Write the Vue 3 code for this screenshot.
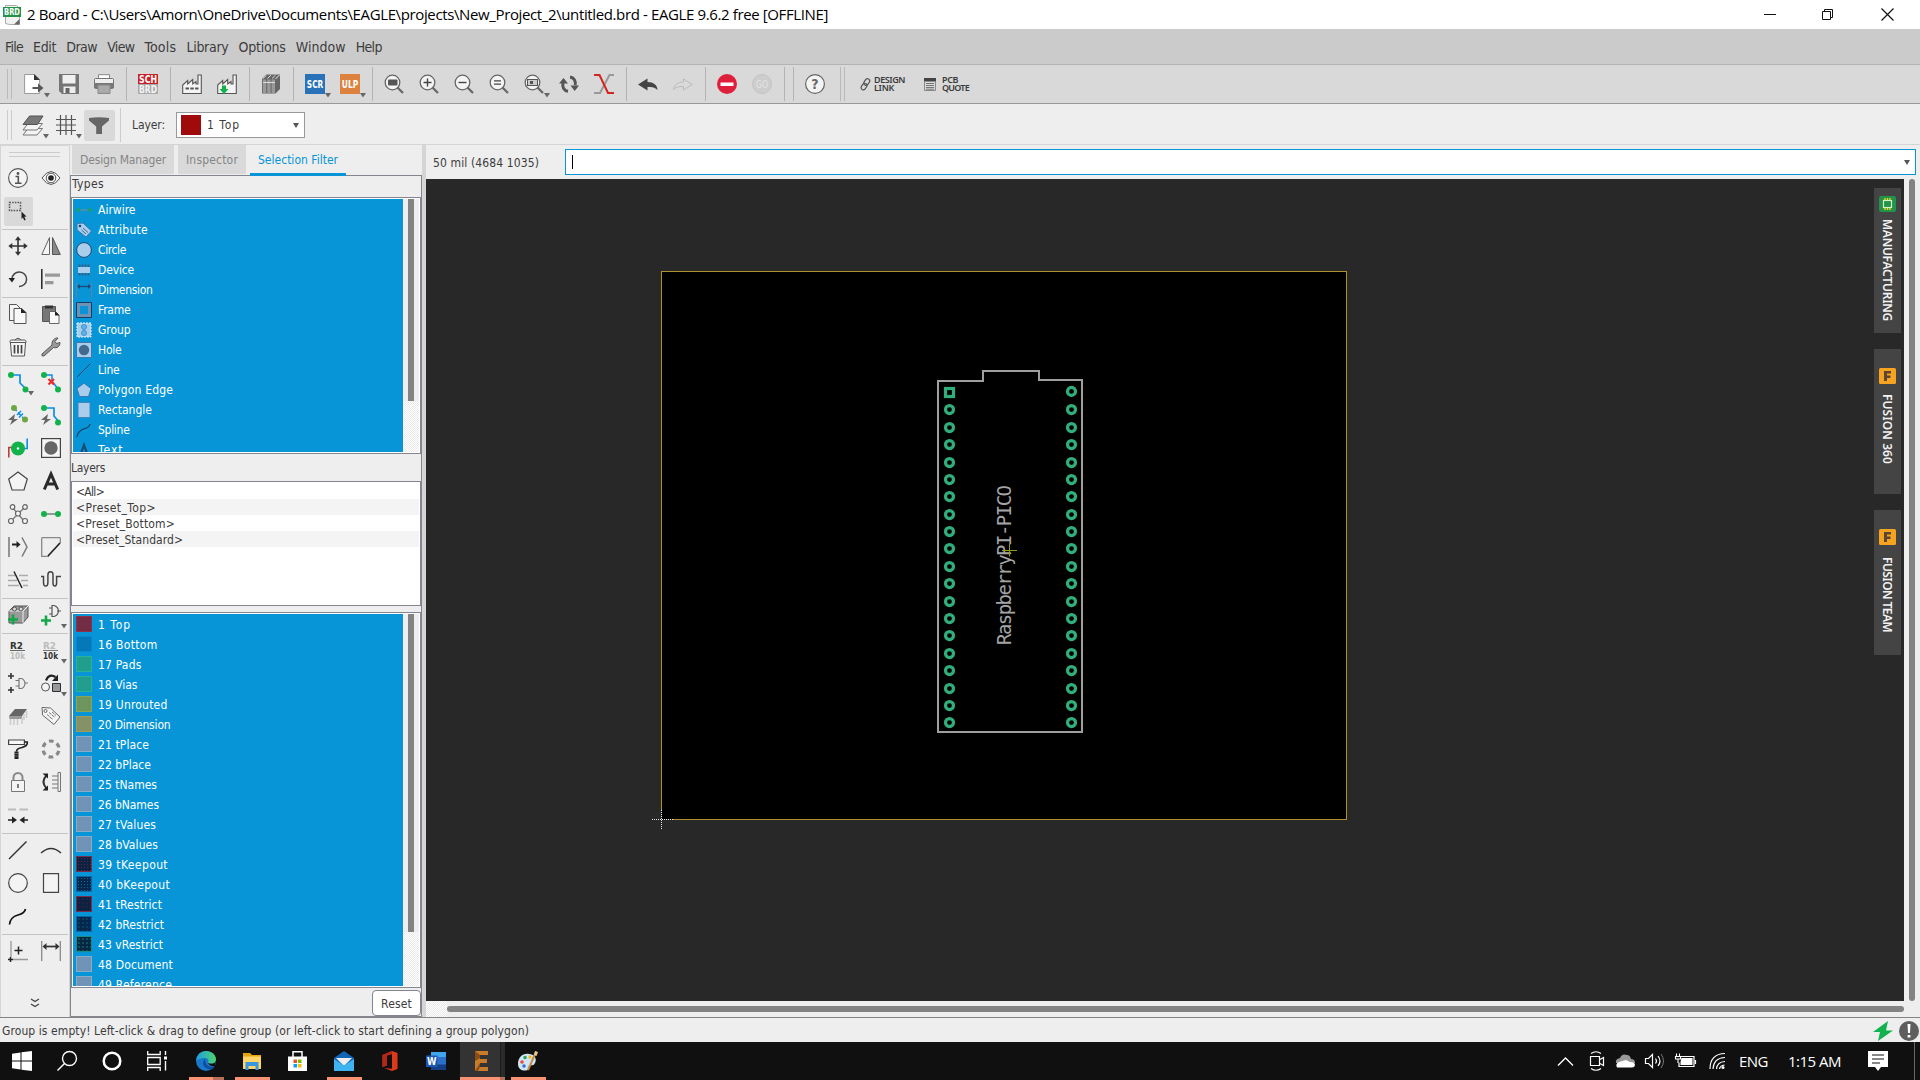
<script setup>
// Stretches or tightens a label's tracking so it takes the given length in px
const vFit = {
  mounted(el, { value, arg }) {
    if (!value) return
    const box = el.getBoundingClientRect()
    const size = arg === 'y' ? box.height : box.width
    const n = el.textContent.trim().length
    el.style.letterSpacing = ((value - size) / n).toFixed(3) + 'px'
  },
}

const menus = [['File', 18], ['Edit', 23], ['Draw', 31], ['View', 27], ['Tools', 32], ['Library', 42], ['Options', 47], ['Window', 50], ['Help', 26]]

const arrow = '<path d="M20 19h6l-3 4.500z" fill="#666"/>'
const lens = '<circle cx="8.500" cy="8.500" r="7.300" fill="#f4f4f4" stroke="#666" stroke-width="1.300"/><path d="M13.500 13.500l5.500 5.500" stroke="#666" stroke-width="2.200"/>'
const g = '#12b24a'
const b = '#0d8ee9'
const dot = (x, y, c = g) => `<circle cx="${x}" cy="${y}" r="3" fill="${c}"/>`
const factory = '<path d="M.700 19.500V11l5-4.500V10l5-4.500V10l3.300-2.500V10h2V1h3.300v18.500z" fill="#f4f4f4" stroke="#555" stroke-width="1.100"/>'

const icons = {
  file: `<path d="M.600.500h10l5 5v14h-15z" fill="#fff" stroke="#999"/><path d="M10 0l6 6h-6z" fill="#333"/><path d="M8.500 14h8" stroke="#555" stroke-width="2"/><path d="M14 9.500l5.500 4.500-5.500 4.500z" fill="#555"/>${arrow}`,
  save: '<path d="M0 0h20v20H3l-3-3z" fill="#757575"/><path d="M3.500 1h13v8.500h-13z" fill="#f0f0f0"/><path d="M4.500 12.500h12V19h-12z" fill="#eee"/><path d="M6.500 14h4v5h-4z" fill="#666"/>',
  print: '<path d="M4.500 5V.700h11V5" fill="#fff" stroke="#888"/><rect x=".500" y="4.500" width="19" height="10" rx="1" fill="#eee" stroke="#777"/><path d="M0 9h20v5H0z" fill="#777"/><path d="M4 11h12v8.500H4z" fill="#aaa" stroke="#888"/>',
  sch: '<path d="M0 0h20v10H0z" fill="#ca2027"/><path d="M0 10h20v10H0z" fill="#aaa"/><text x="1" y="8.800" font-size="10" textLength="18" lengthAdjust="spacingAndGlyphs" font-weight="bold" fill="#fff">SCH</text><text x="1" y="18.800" font-size="10" textLength="18" lengthAdjust="spacingAndGlyphs" font-weight="bold" fill="#f4f4f4">BRD</text>',
  cam: factory + '<path d="M3.500 14.500h13" stroke="#555" stroke-width="2" stroke-dasharray="3.500 1.300"/>',
  camdown: factory + `<path d="M5 11.500h4V15h2.500L7 20 2.500 15H5z" fill="${g}"/>`,
  lib: '<path d="M1 5l4-4.500h14V15l-4.500 4.500H1z" fill="#666"/><path d="M1.800 5.500h3.400v13.500H1.800zM6.200 5.500h3.400v13.500H6.200zM10.600 5.500h3.400v13.500h-3.400z" fill="#999"/><path d="M2 4.500l3.500-3.300M6.500 4.500L10 1.200M11 4.500l3.500-3.300M2 8.500h12" stroke="#ddd"/><path d="M14.500 5l4-4" stroke="#eee"/>',
  scr: `<path d="M0 0h20v20H0z" fill="#2a72b8"/><text x="1.800" y="13.800" font-size="10" font-weight="bold" fill="#fff" textLength="16.500" lengthAdjust="spacingAndGlyphs">SCR</text>${arrow}`,
  ulp: `<path d="M0 0h20v20H0z" fill="#dc823e"/><text x="1.800" y="13.800" font-size="10" font-weight="bold" fill="#fff" textLength="16.500" lengthAdjust="spacingAndGlyphs">ULP</text>${arrow}`,
  zfit: lens + '<rect x="4" y="5.500" width="9.500" height="6" rx="1" fill="#555"/>',
  zin: lens + '<path d="M4.500 8.500h8M8.500 4.500v8" stroke="#444" stroke-width="1.400"/>',
  zout: lens + '<path d="M4.500 8.500h8" stroke="#444" stroke-width="1.400"/>',
  zredraw: lens + '<path d="M5 6.800h7M5 10.200h7" stroke="#444" stroke-width="1.300"/>',
  zsel: lens + `<rect x="3.500" y="5.500" width="10" height="6" fill="#ccc" stroke="#555"/><path d="M6 7h3v3H6z" fill="#555"/>${arrow}`,
  sync: '<path d="M9 17.300c-4-.600-6-4-5-8.500M11 3c4 .500 6 4 5.200 8.300" fill="none" stroke="#555" stroke-width="3"/><path d="M0 9.500L4.500 4 9 9.500zM11.500 11.500h8.500L15.700 17z" fill="#555"/>',
  rats: '<path d="M20 1h-4.500L6 19H0" fill="none" stroke="#999" stroke-width="2"/><path d="M0 1h5.500L14 19h6" fill="none" stroke="#d2251f" stroke-width="2"/>',
  undo: '<path d="M0 10.500L9.500 4.500v3.500c6 0 10 3 10 8-2.500-2.500-5-3-10-3v3.500z" fill="#444"/>',
  redo: '<path d="M19.300 10.500L10.500 5v3C5 8 .800 11 .700 15.500 3 13 5.500 12.500 10.500 12.500V16z" fill="none" stroke="#bbb"/>',
  stop: '<circle cx="10" cy="10" r="10" fill="#df203c"/><path d="M3.500 8.500h13v3.500h-13z" fill="#fff"/>',
  go: '<circle cx="10" cy="10" r="9.500" fill="#cdcdcd" stroke="#c4c4c4"/><text x="4" y="14" font-size="11" fill="#e3e3e3" textLength="12" lengthAdjust="spacingAndGlyphs">GO</text>',
  help: '<circle cx="10" cy="10" r="9.400" fill="#f4f4f4" stroke="#666" stroke-width="1.200"/><text x="10" y="15" text-anchor="middle" font-size="14" font-weight="bold" fill="#666">?</text>',
  layers: `<path d="M5 13h14.500l-5.500 6.500H0z" fill="#f4f4f4" stroke="#777" transform="translate(0 .500)"/><path d="M5 8.500h14.500L14 15H0z" fill="#f4f4f4" stroke="#777" /><path d="M6.500 1H20l-5.500 8.500H0z" fill="#777" stroke="#555"/>${arrow}`,
  grid: `<path d="M4.500 0v20M10 0v20M15.500 0v20M0 4.500h20M0 10h20M0 15.500h20" stroke="#555" stroke-width="1.200"/>${arrow}`,
  filter: '<path d="M0 2q10-1.500 20 0v2.500l-7 6v7.500H7.200v-7.500L0 4.500z" fill="#666"/>',
  info: '<circle cx="10" cy="10" r="9.400" fill="#f4f4f4" stroke="#555" stroke-width="1.100"/><circle cx="10" cy="5.500" r="1.400" fill="#555"/><path d="M7.500 8.500h2.800V15M7 15.300h6.500" fill="none" stroke="#555" stroke-width="1.600"/>',
  eye: '<path d="M1 10q9-13 18 0-9 13-18 0z" fill="#f8f8f8" stroke="#555"/><circle cx="10" cy="10" r="4.800" fill="none" stroke="#555"/><circle cx="10" cy="10" r="2.800" fill="#222"/>',
  select: '<path d="M1.500 1.500h11v8h-11z" fill="none" stroke="#555" stroke-width="1.500" stroke-dasharray="1.500 1.200"/><path d="M13.500 10.500l5 5-2.200.300 1.400 2.900-1.400.700-1.400-3-1.400 1.500z" fill="#222"/>',
  move: '<path d="M10 3v14M3 10h14" stroke="#333" stroke-width="1.600"/><path d="M10 .300l3 4H7zM10 19.700l3-4H7zM.300 10l4-3v6zM19.700 10l-4-3v6z" fill="#333"/>',
  mirror: '<path d="M8.500 1.500v17H.800z" fill="#f4f4f4" stroke="#666"/><path d="M11.500 1.500v17h7.800z" fill="#888" stroke="#555"/>',
  rotate: '<path d="M4 10a7.300 7.300 0 1 1 7 7.500" fill="none" stroke="#444" stroke-width="1.500"/><path d="M.500 9h6.500l-3 4.500z" fill="#222"/>',
  align: '<path d="M.800 0v20" stroke="#222" stroke-width="1.500"/><path d="M4 4.500h15v3.300H4zM4 12h8.500v3.300H4z" fill="#999"/>',
  copy: '<path d="M1.500.500h7l4 4v12h-11z" fill="#f4f4f4" stroke="#555"/><path d="M6 4.500h7.500l4.500 4v11H6z" fill="#f8f8f8" stroke="#555"/><path d="M13 4l5.500 5H13z" fill="#222"/>',
  paste: '<path d="M1.500 2.500h13v15h-13z" fill="#777" stroke="#555"/><path d="M4 1.500h8v3H4z" fill="#333"/><path d="M8.500 7.500h6l3.500 3.500v8.500H8.500z" fill="#f8f8f8" stroke="#666"/><path d="M14 7l4.500 4.500H14z" fill="#222"/>',
  trash: '<path d="M2.500 5.500h15v.500l-1 13h-13l-1-13z" fill="#f4f4f4" stroke="#555"/><path d="M2 4.500q0-1.500 1.500-1.500h13q1.500 0 1.500 1.500v1H2zM7 3q3-3.500 6 0" fill="#f4f4f4" stroke="#555"/><path d="M6.500 8v8.500M10 8v8.500M13.500 8v8.500" stroke="#444" stroke-width="1.700"/>',
  wrench: '<path d="M1 17l10-9c-.500-4 2.500-7.500 6-7l-3 3.500 1.500 2 3.500-1c0 4-3 6-6.500 5L3 19q-3 .500-2-2z" fill="#999" stroke="#555"/>',
  route: `<path d="M4 3h8v8l6 6" fill="none" stroke="${b}" stroke-width="1.700"/>${dot(3, 3)}${dot(17.5, 17.5)}${arrow}`,
  ripup: `<path d="M4 3h7v6l6 8" fill="none" stroke="${b}" stroke-width="1.500"/><path d="M7.500 7l5.500 5.500M13 7l-5.500 5.500" stroke="#f02b2b" stroke-width="2.200"/>${dot(3, 3)}${dot(17, 17.500)}`,
  fanout: `<path d="M6 3l11 12" stroke="${b}" stroke-width="1.500" stroke-dasharray="4 2"/><path d="M9 10l4-4M11 12.500l4-4" stroke="${b}" stroke-width="1.500"/>${dot(6, 3, '#6ba642')}${dot(17, 14.500, '#6ba642')}<path d="M7 9l-7 6h4l-2 5 8-6H6z" fill="#666"/>`,
  autoroute: `<path d="M4 3h9v8l5 6" fill="none" stroke="${b}" stroke-width="1.700"/>${dot(3, 3)}${dot(17, 17.500)}<path d="M7 9l-7 6h4l-2 5 8-6H6z" fill="#666"/>`,
  via: `<path d="M.800 19.500V9.500H6" fill="none" stroke="#c43a3a" stroke-width="1.600"/><path d="M19.200.500v10H14" fill="none" stroke="${b}" stroke-width="1.600"/><circle cx="10" cy="10.500" r="7" fill="${g}"/><circle cx="10" cy="10.500" r="1.200" fill="#fff"/>`,
  hole: '<rect x=".600" y=".600" width="18.800" height="18.800" fill="#f6f6f6" stroke="#444" stroke-width="1.200"/><circle cx="10" cy="10" r="6.700" fill="#666"/>',
  poly: '<path d="M10 1l9.300 7L16 19H4L.700 8z" fill="#f4f4f4" stroke="#444" stroke-width="1.200"/>',
  text: '<path d="M3.300 18.500L10 3l6.700 15.500M6 13h8" fill="none" stroke="#2a2a2a" stroke-width="3"/>',
  net: '<path d="M4 3l12 14M17 3L3 17" stroke="#777" stroke-width="1.300"/><g fill="#f4f4f4" stroke="#666" stroke-width="1.200"><circle cx="4.500" cy="3" r="2.300"/><circle cx="17" cy="3" r="2.300"/><circle cx="10" cy="9.500" r="2.500"/><circle cx="3" cy="17" r="2.500"/><circle cx="17" cy="17" r="2.500"/></g>',
  airwire: `<path d="M3 10h14" stroke="#888" stroke-width="1.700"/>${dot(3, 10)}${dot(17, 10)}`,
  opti: '<path d="M1 0v20M14 .500l5 9.500-5 9.500" fill="none" stroke="#777" stroke-width="1.500"/><path d="M4 7.500h6" stroke="#222" stroke-width="2"/><path d="M8.500 4l4 3.500-4 3.500z" fill="#222"/>',
  miter: '<path d="M.700.700h18.600M.700.700v18.600H8M19.300.700V6" fill="none" stroke="#888" stroke-width="1.300"/><path d="M7 19L19 6" stroke="#222" stroke-width="1.700"/>',
  split: '<path d="M0 5.500h7M11 5.500h9M0 10.500h9M13 10.500h7M0 15.500h11M15 15.500h5" stroke="#aaa" stroke-width="1.600"/><path d="M6 1.500l8 16.500" stroke="#222" stroke-width="1.500"/>',
  meander: '<path d="M0 6.500h2.500v6q0 3.500 2.200 3.500t2.200-3.500V5q0-3.300 2.600-3.300T12 5v8q0 3 1.800 3t1.800-3V6.500H20" fill="none" stroke="#444" stroke-width="1.500"/>',
  part: `<path d="M1 6l5-5h14v11l-5 6H1z" fill="#999" stroke="#555"/><path d="M1 6h14v12M15 6l5-5" fill="none" stroke="#eee"/><circle cx="6.500" cy="4" r="2" fill="#ddd" stroke="#555"/><circle cx="13" cy="4" r="2" fill="#ddd" stroke="#555"/><path d="M0 14.500h10M5 9.500v10" stroke="#12a847" stroke-width="2.600"/>`,
  gate: `<path d="M8 3h3M8 9h3M16 6h4M11 .500h2q4 1 4.500 5.500-.500 4.500-4.500 5.500h-2z" fill="none" stroke="#555" stroke-width="1.200"/><path d="M0 15.500h10M5 10.500v10" stroke="#12a847" stroke-width="2.600"/>${arrow}`,
  name: '<text x="2" y="8.700" font-size="9.500" font-weight="bold" fill="#333" textLength="13" lengthAdjust="spacingAndGlyphs">R2</text><path d="M2 10.500h15" stroke="#666"/><text x="2" y="19" font-size="9.500" font-weight="bold" fill="#bbb" textLength="15" lengthAdjust="spacingAndGlyphs">10k</text>',
  value: `<text x="2" y="8.700" font-size="9.500" font-weight="bold" fill="#bbb" textLength="13" lengthAdjust="spacingAndGlyphs">R2</text><path d="M2 10.500h15" stroke="#777"/><text x="2" y="19" font-size="9.500" font-weight="bold" fill="#333" textLength="15" lengthAdjust="spacingAndGlyphs">10k</text>${arrow}`,
  smash: '<path d="M0 3h6M3 0v6M0 17h6M3 14v6" stroke="#333" stroke-width="1.600"/><path d="M7.500 7.500h4M7.500 13h4M17 10h3M11 5.500h2.500q3 1 3.500 5-.500 4-3.500 5H11z" fill="none" stroke="#777" stroke-width="1.200"/>',
  replace: `<path d="M5 7.500Q8 0 14.500 4" fill="none" stroke="#222" stroke-width="2.200"/><path d="M17 1.500v6.500h-6z" fill="#222"/><circle cx="4.500" cy="14" r="4" fill="#f4f4f4" stroke="#555"/><path d="M11.500 10.500h8v8h-8z" fill="#999" stroke="#2a2f3a"/>${arrow}`,
  lock1: '<path d="M7 3h12l-5 7H1z" fill="#666"/><path d="M1 10h13l.500 3H1.500z" fill="#999"/><path d="M2.500 13v6M6 13v6M9.500 13v6M14 12v6M16 8v6M18.500 5v7" stroke="#ccc" stroke-width="1.500"/>',
  tag: '<path d="M1 1.500l8.500.500L19 11l-6 7.500L1.500 9z" fill="#f4f4f4" stroke="#666"/><circle cx="4.500" cy="5" r="1.500" fill="none" stroke="#666"/><path d="M6 8.500l6 5M8 6.500l6 5M11 6l4 3.500" stroke="#777" stroke-dasharray="3 .600"/>',
  paint: '<path d="M.600 1h15.800v4.500H.600z" fill="#f8f8f8" stroke="#444" stroke-width="1.200"/><path d="M16.500 3h2.800q.500 4-5.300 5.500-5.500 1-5.500 4" fill="none" stroke="#222" stroke-width="1.600"/><path d="M6.500 12.500h4V20h-4z" fill="#222"/><path d="M6.500 14.500h4M6.500 17h4" stroke="#999" stroke-width=".600"/>',
  ring: '<circle cx="10" cy="10" r="8" fill="none" stroke="#888" stroke-width="3.200" stroke-dasharray="4.600 3.777" stroke-dashoffset="-1.900"/>',
  lock: '<path d="M3.500 8.500h13v11h-13z" fill="#f4f4f4" stroke="#777"/><path d="M5.500 8.500V5.500a4.500 4.500 0 0 1 9 0v3" fill="none" stroke="#888" stroke-width="2"/><path d="M10 12v4" stroke="#555" stroke-width="1.500"/>',
  pinswap: '<path d="M5.500 3.500q-6 6 0 13" fill="none" stroke="#333" stroke-width="2"/><path d="M1.500 1.500h5.500v5zM1.500 18.500h5.500v-5z" fill="#222"/><path d="M17 .500h2.500v19H17zM11 4h6M11 8h6M11 12h6M11 16h6" fill="none" stroke="#777"/>',
  pair: '<path d="M0 4.500h8M11.500 4.500h8.500" stroke="#bbb" stroke-width="2"/><path d="M0 15h5M15 15h5" stroke="#222" stroke-width="1.700"/><path d="M4 11.500l5 3.500-5 3.500zM16.500 11.500l-5 3.500 5 3.500z" fill="#222"/>',
  line: '<path d="M1 19L18.500 1.500" stroke="#333" stroke-width="1.400"/>',
  arc: '<path d="M0 13q10-9 20 0" fill="none" stroke="#333" stroke-width="1.400"/>',
  circle: '<circle cx="10" cy="10" r="9.300" fill="#f4f4f4" stroke="#444" stroke-width="1.200"/>',
  rect: '<path d="M2.500.600h15v18.800h-15z" fill="#f4f4f4" stroke="#444" stroke-width="1.200"/>',
  spline: '<path d="M1.500 18.500c.500-6 3.500-8 8.500-9.500 4-1 7-3 7.500-6" fill="none" stroke="#111" stroke-width="1.700"/>',
  mark: '<path d="M3 0v16M5 18.500h15" stroke="#999" stroke-width="1.300"/><path d="M10.500 5.500v8M6.500 9.500h8M2.500 16v5M0 18.500h5" stroke="#222" stroke-width="1.500"/>',
  dim: '<path d="M.700 0v20M19.300 0v20" stroke="#888" stroke-width="1.300"/><path d="M4 5.500h12" stroke="#333" stroke-width="1.700"/><path d="M5.500 2L1.500 5.500l4 3.500zM14.500 2l4 3.500-4 3.500z" fill="#333"/>',
}

const toolbar = [
  ['file', 'save', 'print'], ['sch'], ['cam', 'camdown'], ['lib'], ['scr', 'ulp'],
  ['zfit', 'zin', 'zout', 'zredraw', 'zsel', 'sync', 'rats'], ['undo', 'redo'], ['stop', 'go'],
]

const palette = [
  [['info', 'eye'], ['select']],
  [['move', 'mirror'], ['rotate', 'align']],
  [['copy', 'paste'], ['trash', 'wrench']],
  [['route', 'ripup'], ['fanout', 'autoroute'], ['via', 'hole'], ['poly', 'text'], ['net', 'airwire'], ['opti', 'miter'], ['split', 'meander']],
  [['part', 'gate']],
  [['name', 'value'], ['smash', 'replace'], ['lock1', 'tag'], ['paint', 'ring'], ['lock', 'pinswap'], ['pair']],
  [['line', 'arc'], ['circle', 'rect'], ['spline']],
  [['mark', 'dim']],
]

const lb = '#abcdec'
const dk = '#1d4a73'
const types = [
  ['Airwire', 37.5, '<path d="M4 8h8" stroke="#6a8fb5" stroke-width="1.300"/><circle cx="2.500" cy="8" r="2.200" fill="#13a076"/><circle cx="13.500" cy="8" r="2.200" fill="#13a076"/>'],
  ['Attribute', 50, `<path d="M1 1.500L7 1l8.500 8-5.500 6L1 8z" fill="${lb}" stroke="#3a75aa"/><circle cx="4" cy="4" r="1.300" fill="${dk}"/><path d="M5.500 8l4.500 4M7 6l5 4.500" stroke="#3a6a96"/>`],
  ['Circle', 28, `<circle cx="8" cy="8" r="7.400" fill="${lb}" stroke="${dk}"/>`],
  ['Device', 36, `<path d="M3.500 2.500v11M6.500 2.500v11M9.500 2.500v11M12.500 2.500v11" stroke="#35608a" stroke-width="1.800"/><rect x="2" y="5" width="12" height="6" fill="${lb}"/>`],
  ['Dimension', 54.5, `<path d="M.500 0v16M15.500 0v16" stroke="#4e86b8"/><path d="M2 4.500h12" stroke="${dk}" stroke-width="1.300"/><path d="M4 2L1 4.500 4 7zM12 2l3 2.500L12 7z" fill="${dk}"/>`],
  ['Frame', 32.5, '<path d="M.500.500h15v15H.500z" fill="#6f93b7" stroke="#173f66"/><path d="M4 4h8v8H4z" fill="#0795d8"/>'],
  ['Group', 32.5, `<path d="M1 1h14v14H1z" fill="${lb}" stroke="#e6f2ff" stroke-dasharray="2 1"/><circle cx="8" cy="5" r="2.500" fill="#62b4e8" stroke="#3b93cf"/><circle cx="8" cy="11" r="2.500" fill="#62b4e8" stroke="#3b93cf"/>`],
  ['Hole', 23.5, `<path d="M.500.500h15v15H.500z" fill="${lb}" stroke="#4078ab"/><circle cx="8" cy="8" r="5.200" fill="#44698e"/>`],
  ['Line', 21.5, `<path d="M1 15L14.500 1.500" stroke="#17456f"/>`],
  ['Polygon Edge', 75, `<path d="M8 1.200l7 5.300-2.500 8h-9L1 6.500z" fill="${lb}" stroke="#3d78ae"/>`],
  ['Rectangle', 54, `<path d="M2 .500h12v15H2z" fill="${lb}" stroke="#4584ba"/>`],
  ['Spline', 31.5, '<path d="M1 15c.500-5 3-6.500 6.500-8 4-1 6-2 6.500-5" fill="none" stroke="#0c3558" stroke-width="1.200"/>'],
  ['Text', 25.5, `<path d="M3.500 15.500L8 3l4.500 12.500M5.500 12h5" fill="none" stroke="${dk}" stroke-width="2.200"/>`],
]

const presets = [['<All>', 28], ['<Preset_Top>', 80], ['<Preset_Bottom>', 99], ['<Preset_Standard>', 107]]

const layers = [
  ['1', 'Top', 33, 'top'], ['16', 'Bottom', 59.5, 'bottom'], ['17', 'Pads', 43.5, 'pads'], ['18', 'Vias', 39.5, 'pads'],
  ['19', 'Unrouted', 69.5, 'unrouted'], ['20', 'Dimension', 72.5, 'dimension'], ['21', 'tPlace', 51, 'grey'], ['22', 'bPlace', 53, 'grey'],
  ['25', 'tNames', 59, 'grey'], ['26', 'bNames', 61, 'grey'], ['27', 'tValues', 58, 'grey'], ['28', 'bValues', 60, 'grey'],
  ['39', 'tKeepout', 70, 'keep-t'], ['40', 'bKeepout', 72, 'keep-b'], ['41', 'tRestrict', 64, 'res-t'], ['42', 'bRestrict', 66, 'res-b'],
  ['43', 'vRestrict', 65, 'res-v'], ['48', 'Document', 75, 'grey'], ['49', 'Reference', 74, 'grey'],
]

// Pad rows of the module, in canvas coordinates
const padRows = [178, 232, 283, 337, 388, 439, 493, 544, 595, 649, 700, 754, 805, 856, 910, 961, 1015, 1066, 1117].map((v) => 171.2 + v / 3)
const leftPads = padRows
const rightPads = [212.4, ...padRows]

const rail = [['MANUFACTURING', 102, 'm'], ['FUSION 360', 70, 'f'], ['FUSION TEAM', 75, 't']]

const fIcon = '<rect width="17" height="16" rx="1.500" fill="#f6a41f"/><path d="M5 13V3h7v2.500H8v2h3.500V10H8v3z" fill="#5a4632"/>'
const railIcons = {
  m: '<rect width="17" height="16" rx="2" fill="#219447"/><path d="M6 2v12M8.500 2v12M11 2v12" stroke="#f3d91c" stroke-width="1.300"/><rect x="4.500" y="4.500" width="8" height="7" fill="#219447" stroke="#dcebc8" stroke-width="1.200"/>',
  f: fIcon,
  t: fIcon,
}

const apps = [
  ['start', 12, 20, '<path d="M0 2.800L8.500 1.500v8H0zM9.500 1.300L20 0v9.500H9.500zM0 10.500h8.500v8L0 17.300zM9.500 10.500H20V20L9.500 18.700z" fill="#fff"/>'],
  ['search', 57, 20, '<circle cx="12.500" cy="7.500" r="7" fill="none" stroke="#fff" stroke-width="1.400"/><path d="M7.500 12.500L.500 19.500" stroke="#fff" stroke-width="1.500"/>'],
  ['cortana', 102, 20, '<circle cx="10" cy="10" r="8.300" fill="none" stroke="#fff" stroke-width="2.500"/>'],
  ['tasks', 147, 20, '<path d="M.700 0v3.500h12.500V0M.700 20v-3.500h12.500V20M.700 6.500h12.500v7H.700z" fill="none" stroke="#fff" stroke-width="1.300"/><path d="M18.500 0v4M18.500 10v9.500" stroke="#fff" stroke-width="1.400"/><path d="M17 5.500h3v3h-3z" fill="#fff"/>'],
  ['edge', 196, 20, '<defs><linearGradient id="eg" x1="0" x2="1"><stop offset="0" stop-color="#1c9de8"/><stop offset="1" stop-color="#4fd467"/></linearGradient></defs><circle cx="10" cy="10" r="10" fill="#1a77c9"/><path d="M0 10C.500 3.500 5 0 10 0c6 0 10 4 10 8.500 0 4-4.500 5-8 3.500 1-1.500 1-5-3-5-4 0-9 2-9 3z" fill="url(#eg)"/><path d="M9 8c-4 3-2 10 6 10.500 1.500-.500 3-1.500 3.700-3-5 1.500-9.500-1-9.700-7.500z" fill="#0d4f9e"/><path d="M20 9c-.500 4-5 4.500-8 3 1 2 4 4 7 3z" fill="#101010"/>'],
  ['files', 243, 18, '<path d="M0 2h7l2 2h9v14H0z" fill="#e5a50e"/><path d="M0 5.500h18V18H0z" fill="#fdd568"/><path d="M2.500 11h13v8h-3v-4h-7v4h-3z" fill="#3a97dd"/>'],
  ['store', 288, 19, '<path d="M5 6V.800h9V6" fill="none" stroke="#fff" stroke-width="1.500"/><path d="M0 5.500h19V20H0z" fill="#fff"/><path d="M5.500 8.500h3.500v3.500H5.500z" fill="#e8502b"/><path d="M10 8.500h3.500v3.500H10z" fill="#7fba00"/><path d="M5.500 13h3.500v3.500H5.500z" fill="#00a4ef"/><path d="M10 13h3.500v3.500H10z" fill="#ffb900"/>'],
  ['mail', 334, 20, '<path d="M0 7L10 0l10 7v12H0z" fill="#1266b8"/><path d="M2 7h16l-8 8z" fill="#eee"/><path d="M0 8l10 6.500L20 8v12H0z" fill="#3db3f0"/>'],
  ['office', 382, 16, '<path d="M10 0l5.500 2v16L10 20 2 17l8 .800V3L5 4.500v10L.500 16V4z" fill="#dd3a1a"/><path d="M.500 4L10 0v3L5 4.500v10L.500 16z" fill="#b3261a"/>'],
  ['word', 426, 20, '<path d="M5 1h15v18H5z" fill="#2a6fc9"/><path d="M5 1h15v5H5z" fill="#41a5ee"/><path d="M5 13.500h15V19H5z" fill="#123f85"/><path d="M0 4.500h11.500v11.500H0z" fill="#1a56b8"/><text x="1" y="13.700" font-size="10" font-weight="bold" fill="#fff" textLength="9.500" lengthAdjust="spacingAndGlyphs">W</text>'],
  ['eagle', 475, 14, '<path d="M0 0h13v4H5v4h7v4H5v4h8v4H0z" fill="#c87b2a"/><path d="M0 0l5 4v3L0 10zM5 12l-5 8h3l2-4z" fill="#8a4c14"/>'],
  ['paintapp', 518, 20, '<path d="M0 13C0 6 5 2 11 3c6 .500 8 5 6 9s-5 1-6 3 1 4-3 4.500S0 18 0 13z" fill="#cfe4f4"/><circle cx="4" cy="11" r="1.800" fill="#e64a3b"/><circle cx="7" cy="6.500" r="1.700" fill="#2e9f48"/><circle cx="12" cy="6" r="1.700" fill="#f2bb1d"/><circle cx="6" cy="15" r="1.700" fill="#2b6fd4"/><path d="M18 1l-8 18" stroke="#c98b43" stroke-width="2"/><path d="M16 4l1-4 3 1-1.500 4z" fill="#f0c690"/>'],
]
</script>

<template>
  <div class="app">
    <header class="title">
      <svg class="brd" width="18" height="20" viewBox="0 0 18 20"><path d="M2.500.500h11l3 3v16h-10l-4-1z" fill="#f2f2f2" stroke="#aaa" /><path d="M11 19.500l5.500-5.500v5.500z" fill="#666" /><path d="M0 2h18v10H0z" fill="#219349" /><text x="1" y="10.300" font-size="9" font-weight="bold" fill="#fff" textLength="16" lengthAdjust="spacingAndGlyphs">BRD</text></svg>
      <span v-fit="801" class="caption">2 Board - C:\Users\Amorn\OneDrive\Documents\EAGLE\projects\New_Project_2\untitled.brd - EAGLE 9.6.2 free [OFFLINE]</span>
      <svg class="winbtns" width="130" height="14" viewBox="0 0 130 14"><path d="M0 7.500h12" stroke="#111" /><path d="M58.500 4.500h8v8h-8zM60.500 4.500v-2h8v8h-2" fill="none" stroke="#111" /><path d="M117.500 1.500l12 12M129.500 1.500l-12 12" stroke="#111" stroke-width="1.200" /></svg>
    </header>

    <nav class="menu">
      <span v-for="m in menus" :key="m[0]" v-fit="m[1]">{{ m[0] }}</span>
    </nav>

    <div class="bar main-bar">
      <i class="grip"></i>
      <div v-for="(grp, i) in toolbar" :key="i" class="grp">
        <svg v-for="k in grp" :key="k" class="ic" viewBox="0 0 20 20" v-html="icons[k]"></svg>
      </div>
      <i class="vline"></i>
      <div class="grp"><svg class="ic" viewBox="0 0 20 20" v-html="icons.help"></svg></div>
      <i class="grip second"></i>
      <div class="link design">
        <svg width="11" height="13" viewBox="0 0 11 13"><g fill="none" stroke="#555" stroke-width="1.200"><rect x="4.500" y=".500" width="4.500" height="7" rx="2.200" transform="rotate(35 6.700 4)" /><rect x="1.800" y="5" width="4.500" height="7" rx="2.200" transform="rotate(35 4 8.500)" /></g></svg>
        <span class="two"><b v-fit="31">DESIGN</b><b v-fit="20">LINK</b></span>
      </div>
      <div class="link quote">
        <svg width="12" height="13" viewBox="0 0 12 13"><path d="M0 0h12v3.500H0z" fill="#444" /><path d="M.500 3v9.500h11V3" fill="none" stroke="#888" /><path d="M2 5.500h8M2 7.500h8M2 9.500h8M2 11.200h8" stroke="#777" /></svg>
        <span class="two"><b v-fit="16">PCB</b><b v-fit="27">QUOTE</b></span>
      </div>
    </div>

    <div class="bar layer-bar">
      <i class="grip"></i>
      <svg class="ic first" viewBox="0 0 20 20" v-html="icons.layers"></svg>
      <svg class="ic" viewBox="0 0 20 20" v-html="icons.grid"></svg>
      <div class="pressed"><svg class="ic" viewBox="0 0 20 20" v-html="icons.filter"></svg></div>
      <i class="vline"></i>
      <span v-fit="33" class="lbl">Layer:</span>
      <div class="combo"><i></i><span v-fit="33">1 Top</span><svg width="6" height="5" viewBox="0 0 6 5"><path d="M0 0h6L3 5z" fill="#555" /></svg></div>
    </div>

    <main>
      <aside class="palette">
        <i class="hgrip"></i>
        <template v-for="(sec, i) in palette" :key="i">
          <i v-if="i" class="hline"></i>
          <div v-for="(row, r) in sec" :key="r" class="tools">
            <div v-for="k in row" :key="k" class="tool" :class="{ on: k === 'select' }"><svg class="ic" viewBox="0 0 20 20" v-html="icons[k]"></svg></div>
          </div>
        </template>
        <svg class="more" width="10" height="10" viewBox="0 0 10 10"><path d="M1 1l4 2.500L9 1M1 6l4 2.500L9 6" fill="none" stroke="#444" stroke-width="1.400" /></svg>
      </aside>

      <section class="side">
        <div class="tabs">
          <div class="tab t1"><span v-fit="86">Design Manager</span></div>
          <div class="tab t2"><span v-fit="52">Inspector</span></div>
          <div class="tab t3"><span v-fit="80">Selection Filter</span></div>
        </div>
        <div class="pane">
          <div class="head"><span v-fit="32">Types</span></div>
          <div class="box types">
            <div class="blue">
              <div v-for="t in types" :key="t[0]" class="item"><svg width="16" height="16" viewBox="0 0 16 16" v-html="t[2]"></svg><span v-fit="t[1]">{{ t[0] }}</span></div>
            </div>
            <div class="sb"><i></i></div>
          </div>
          <div class="head second"><span v-fit="34">Layers</span></div>
          <div class="box presets">
            <div v-for="p in presets" :key="p[0]" class="preset"><span v-fit="p[1]">{{ p[0] }}</span></div>
          </div>
          <div class="box layers">
            <div class="blue">
              <div v-for="l in layers" :key="l[0]" class="item"><i class="sw" :class="l[3]"></i><span v-fit="l[2]">{{ l[0] }} {{ l[1] }}</span></div>
            </div>
            <div class="sb"><i></i></div>
          </div>
          <div class="foot"><button><span v-fit="31">Reset</span></button></div>
        </div>
      </section>

      <section class="work">
        <div class="cmd">
          <span v-fit="106" class="pos">50 mil (4684 1035)</span>
          <div class="input"><i></i><svg width="6" height="5" viewBox="0 0 6 5"><path d="M0 0h6L3 5z" fill="#555" /></svg></div>
        </div>
        <div class="view">
          <div class="canvas">
            <svg width="1478" height="822" viewBox="0 0 1478 822">
              <rect x="235.500" y="92.500" width="685" height="548" fill="#000" stroke="#b0912f" />
              <path d="M226 640.500h21M235.500 631v20" stroke="#282828" />
              <path d="M226 640.500h21M235.500 631v20" stroke="#e8e8e8" stroke-dasharray="1 1" />
              <path d="M512 202H557V192H613V201H656V553H512z" fill="none" stroke="#9f9f9f" stroke-width="2" />
              <g fill="none" stroke="#31ae7b" stroke-width="3.200">
                <rect x="519.500" y="209.500" width="8" height="8" />
                <circle v-for="y in leftPads" :key="'l' + y" cx="523.500" :cy="y" r="4" />
                <circle v-for="y in rightPads" :key="'r' + y" cx="645.500" :cy="y" r="4" />
              </g>
              <text class="silk" transform="translate(585 466) rotate(-90)" textLength="160" lengthAdjust="spacing">RaspberryPI-PICO</text>
              <path d="M576 371.500h15M583.500 364.500v13" stroke="#8f9c22" />
            </svg>
            <div class="rail">
              <div v-for="r in rail" :key="r[0]" class="rtab" :class="r[2]"><svg width="17" height="16" viewBox="0 0 17 16" v-html="railIcons[r[2]]"></svg><span v-fit:y="r[1]">{{ r[0] }}</span></div>
            </div>
          </div>
          <div class="vsb"><i></i></div>
        </div>
        <div class="hsb"><b></b><i></i></div>
      </section>
    </main>

    <footer class="status">
      <span v-fit="527">Group is empty! Left-click &amp; drag to define group (or left-click to start defining a group polygon)</span>
      <div class="flags">
        <svg width="20" height="20" viewBox="0 0 20 20"><path d="M15 0L0 11h7L5 20l15-10.500h-7z" fill="#12b24f" /></svg>
        <svg width="20" height="20" viewBox="0 0 20 20"><circle cx="10" cy="10" r="10" fill="#5e5e5e" /><path d="M8.500 3h3l-.500 9H9zM8.600 14h2.800v2.500H8.600z" fill="#fff" /></svg>
      </div>
    </footer>

    <div class="taskbar">
      <div class="apps">
        <i class="active"></i>
        <svg v-for="a in apps" :key="a[0]" class="app-ic" :class="a[0]" :width="a[2]" height="20" :viewBox="`0 0 ${a[2]} 20`" v-html="a[3]"></svg>
        <i class="ul u1"></i><i class="ul u2"></i><i class="ul u3"></i><i class="ul u4"></i><i class="ul u5"></i>
      </div>
      <div class="tray">
        <svg width="141" height="20" viewBox="0 0 141 20" fill="none" stroke="#fff">
          <path d="M1 14.500L8.500 7l7.500 7.500" stroke-width="1.300" />
          <path d="M33.500 5.500h9v9h-9zM43 8.500l3.500-2v8l-3.500-2M34 2.500q5-3.500 10 0M34 17.500q5 3.500 10 0" stroke-width="1.200" />
          <path d="M59 12q-1-4 4-5 2-5 7-3 3 0 4 4 4 0 4 4z" fill="#999" stroke="none" /><path d="M60 16.500q-2-4 2-5.500l7-2 4 2q5 0 5 3-.500 2.500-3 2.500z" fill="#fff" stroke="none" />
          <path d="M88.500 7.500h3l4-4v13l-4-4h-3zM98.500 7.500q2 2.500 0 5M101 5q4 5 0 10" stroke-width="1.200" /><path d="M104 3q5 7 0 14" stroke="#777" />
          <path d="M124 5.500h13v10h-15v-4M138.500 9v4" stroke-width="1.200" /><path d="M124.500 7h11v7h-12v-3z" fill="#fff" stroke="none" /><path d="M119.500 2.500v3M122.500 2.500v3M118.500 5.500h5v2.500h-5zM121 8v4" stroke-width="1.100" />
        </svg>
        <svg class="wifi" width="16" height="18" viewBox="0 0 16 18" fill="none" stroke="#fff" stroke-width="1.200"><path d="M1 17Q1 2 16 1.500M4 17Q4.500 6 16 5.500M7.500 17q.500-7 8.500-7.500M10.500 17q.500-3.500 5-4" /><circle cx="14" cy="15.500" r="1.500" fill="#fff" stroke="none" /></svg>
        <span v-fit="29" class="lang">ENG</span>
        <span v-fit="53" class="clock">1:15 AM</span>
        <svg class="note" width="20" height="20" viewBox="0 0 20 20"><path d="M0 0h20v16h-7l-3 4-3-4H0z" fill="#fff" /><path d="M4 4h12M4 8h12M4 12h8" stroke="#111" stroke-width="1.200" /></svg>
        <i class="peek"></i>
      </div>
    </div>
  </div>
</template>

<style>
body { margin: 0; overflow: hidden; }
</style>

<style scoped>
.app { width: 1920px; height: 1080px; display: flex; flex-direction: column; background: #eee; font: 12px/16px "DejaVu Sans Condensed", "Noto Sans", sans-serif; color: #3c3c3c; overflow: hidden; }
.app * { box-sizing: border-box; }
span, b { white-space: nowrap; }
i { display: block; flex: none; }
svg { display: block; flex: none; overflow: visible; }
.ic { width: 20px; height: 20px; }

.title { height: 29px; background: #fff; display: flex; align-items: center; padding: 0 26px 0 3px; color: #000; }
.caption { font: 15px/20px "Open Sans", "Noto Sans", sans-serif; margin-left: 6px; position: relative; top: -1px; }
.brd { width: 18px; }
.winbtns { margin: -2px 0 0 auto; }

.menu { height: 36px; background: #cbcbcb; border-bottom: 1px solid #b3b3b3; display: flex; align-items: center; gap: 10.100px; padding-left: 5px; font-size: 14px; }

.bar { display: flex; align-items: center; }
.main-bar { height: 39px; background: #d9d9d9; border-bottom: 1px solid #999; }
.grip { width: 5px; height: 30px; margin-left: 7px; border: solid #b9b9b9; border-width: 0 1px; }
.grp { display: flex; gap: 15px; height: 34px; align-items: center; padding: 0 12px 0 11px; border-left: 1px solid #b3b3b3; }
.grip + .grp { border-left: 0; padding-left: 12px; }
.vline { width: 1px; height: 34px; background: #b3b3b3; }
.main-bar > .vline + .grp { margin-left: 8px; }
.grip.second { margin-left: 3px; height: 34px; }
.link { display: flex; align-items: center; }
.design { margin-left: 15px; gap: 3px; }
.quote { margin-left: 19px; gap: 6px; }
.two { display: flex; flex-direction: column; align-items: flex-start; font: 9px/8px "Noto Sans", sans-serif; color: #3a3a3a; }
.two b { font-weight: 600; }

.layer-bar { height: 41px; padding-top: 2px; border-bottom: 1px solid #d5d5d5; }
.layer-bar .grip { border-color: #ccc; }
.layer-bar .first { margin-left: 11px; margin-right: 13px; }
.pressed { width: 31px; height: 31px; margin: 0 5px 0 8px; padding: 6px 5px; background: #d9d9d9; border-radius: 2px; }
.layer-bar .vline { background: #ccc; }
.lbl { margin-left: 11px; }
.combo { width: 129px; height: 26px; margin-left: 11px; border: 1px solid #999; background: #fff; display: flex; align-items: center; padding: 0 5px 0 4px; }
.combo i { width: 20px; height: 20px; background: #9f0b0b; margin-right: 6px; }
.combo svg { margin-left: auto; }

main { display: flex; height: 872px; }
.palette { width: 70px; border: solid #d5d5d5; border-width: 1px 1px 0 1px; display: flex; flex-direction: column; }
.hgrip { height: 5px; margin: 6px 9px 5px 8px; border: solid #ccc; border-width: 1px 0; }
.tools { height: 33px; display: flex; gap: 4px; padding: 2px 0 0 3px; }
.tool { width: 29px; height: 29px; padding: 4px; border-radius: 2px; }
.tool.on { background: #d9d9d9; }
.hline { height: 2px; margin: 0 1px; border-bottom: 1px solid #c4c4c4; }
.more { margin: 30px 0 0 29px; }

.side { width: 356px; border-right: 4px solid #d5d5d5; display: flex; flex-direction: column; }
.tabs { height: 30px; display: flex; padding-left: 2px; color: #858585; }
.tab { height: 29px; padding-left: 8px; display: flex; align-items: center; }
.t1 { width: 102px; background: #d9d9d9; }
.t2 { width: 68px; margin-left: 4px; background: #d9d9d9; }
.t3 { width: 96px; height: 31px; margin-left: 4px; padding-top: 2px; color: #0795d8; border-bottom: 3px solid #0795d8; position: relative; z-index: 1; }
.pane { flex: 1; border: 1px solid #83858f; border-width: 1px 1px 2px; display: flex; flex-direction: column; }
.head { height: 21px; line-height: 17px; padding-left: 1px; }
.head.second { height: 27px; line-height: 29px; padding-left: 0; }
.box { border: 1px solid #83858f; background: #fff; display: flex; overflow: hidden; }
.types { height: 257px; padding: 1px; }
.blue { width: 330px; overflow: hidden; background: #0795d8; color: #fff; padding-left: 3px; }
.item { height: 20px; display: flex; align-items: center; gap: 6px; }
.types .blue { padding-top: 1px; }
.sb { width: 16px; background: repeating-conic-gradient(#fff 0 25%, #e9e9e9 0 50%) 0 0 / 2px 2px; }
.sb i { height: 202px; background: linear-gradient(90deg, #eee 5px, #838383 5px 11px, #eee 11px); }
.presets { height: 125px; flex-direction: column; padding: 1px; }
.preset { height: 16px; padding-left: 3px; line-height: 18px; }
.preset:nth-child(even) { background: #f4f4f4; }
.layers { height: 376px; margin-top: 6px; padding: 1px; }
.layers .item span { padding-top: 2px; }
.layers .sb i { height: 318px; }
.sw { width: 16px; height: 16px; border: 1px solid; }
.top { background: #722c45; border-color: #92304a; }
.bottom { background: #0578ba; border-color: #0a86ce; }
.pads { background: #229e8f; border-color: #27b39a; }
.unrouted { background: #6f955e; border-color: #87a556; }
.dimension { background: #859166; border-color: #a49b58; }
.grey { background: #7094b6; border-color: #8aaac6; }
.keep-t { background: radial-gradient(#5d2447 .7px, #0b2340 .9px) 0 0 / 3px 3px; border-color: #7a2c48; }
.keep-b { background: radial-gradient(#08659c .7px, #06274a .9px) 0 0 / 3px 3px; border-color: #0569a5; }
.res-t { background: radial-gradient(#40203f .6px, #0b2340 .8px) 0 0 / 4px 4px; border-color: #7a2c48; }
.res-b { background: radial-gradient(#07598b .6px, #06274a .8px) 0 0 / 4px 4px; border-color: #0569a5; }
.res-v { background: radial-gradient(#1c8079 .6px, #062743 .8px) 0 0 / 4px 4px; border-color: #1c8d83; }
.foot { flex: 1; display: flex; justify-content: flex-end; padding: 2px 0 0; }
button { width: 49px; height: 26px; background: #fff; border: 1px solid #83858f; border-radius: 4px; font: inherit; color: inherit; padding: 2px 0 0; text-align: center; }

.work { flex: 1; display: flex; flex-direction: column; }
.cmd { height: 34px; display: flex; align-items: center; padding-left: 7px; }
.pos { padding-top: 2px; }
.input { width: 1351px; height: 26px; margin: 0 4px 0 auto; background: #fff; border: 1px solid #0795d8; display: flex; align-items: center; padding: 0 5px 0 6px; }
.input i { width: 1px; height: 14px; background: #000; }
.input svg { margin-left: auto; }
.view { height: 822px; display: flex; }
.canvas { width: 1478px; background: #282828; position: relative; }
.silk { font: 19px "DejaVu Sans Mono", monospace; fill: #a4a4a4; }
.rail { position: absolute; top: 9px; right: 3px; display: flex; flex-direction: column; gap: 16px; }
.rtab { width: 27px; height: 145px; background: #444; display: flex; flex-direction: column; align-items: center; padding-top: 8px; }
.rtab span { writing-mode: vertical-rl; font: 600 12px/16px "Noto Sans", sans-serif; color: #f2f2f2; margin: 7px 2px 0 0; }
.rtab.f { padding-top: 19px; }
.rtab.f span { margin-top: 10px; }
.rtab.t { padding-top: 19px; }
.rtab.t span { margin-top: 12px; }
.vsb { width: 16px; padding-left: 5px; }
.vsb i { width: 6px; height: 822px; border-radius: 3px; background: #838383; }
.hsb { height: 16px; display: flex; padding-top: 0; border: 0; align-items: center; }
.hsb b { width: 21px; height: 16px; background: repeating-conic-gradient(#fff 0 25%, #e9e9e9 0 50%) 0 0 / 2px 2px; }
.hsb i { width: 1457px; height: 6px; border-radius: 3px; background: #838383; }

.status { height: 25px; border-top: 1px solid #838383; display: flex; align-items: center; padding: 1px 1px 0 2px; }
.flags { margin-left: auto; display: flex; gap: 6px; }

.taskbar { height: 38px; background: #101010; display: flex; justify-content: space-between; color: #fff; }
.apps { position: relative; width: 560px; height: 38px; }
.app-ic { position: absolute; top: 9px; }
.start { left: 12px; } .search { left: 57px; } .cortana { left: 102px; } .tasks { left: 147px; } .edge { left: 196px; } .files { left: 243px; }
.store { left: 288px; } .mail { left: 334px; } .office { left: 382px; } .word { left: 426px; } .eagle { left: 475px; } .paintapp { left: 518px; }
.active { position: absolute; left: 460px; top: 0; width: 45px; height: 38px; background: linear-gradient(90deg, #333 40px, #1c1c1c 40px 41px, #2b2b2b 41px); }
.ul { position: absolute; bottom: 0; height: 3px; width: 35px; background: #fb9273; }
.u1 { left: 189px; background: linear-gradient(90deg, #fb9273 24px, #b9705b 24px); } .u2 { left: 235px; } .u3 { left: 327px; }
.u4 { left: 460px; width: 45px; background: linear-gradient(90deg, #fb9273 40px, #b9705b 40px); } .u5 { left: 511px; }
.tray { display: flex; align-items: center; width: 363px; font: 15px/20px "Open Sans", "Noto Sans", sans-serif; }
.wifi { margin-left: 11px; }
.lang { margin-left: 14px; }
.clock { margin-left: 20px; }
.note { margin-left: 27px; margin-top: 0; }
.peek { width: 1px; height: 38px; margin-left: auto; margin-right: 5px; background: #666; }
</style>
